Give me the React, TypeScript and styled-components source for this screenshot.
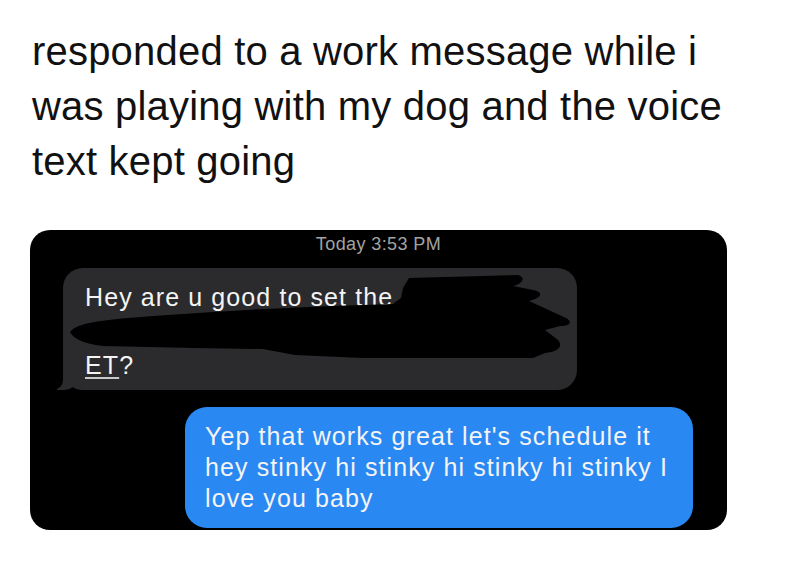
import React from "react";
import styled, { createGlobalStyle } from "styled-components";

const GlobalStyle = createGlobalStyle`
  html, body {
    margin: 0;
    padding: 0;
    background: #ffffff;
  }
`;

const received = ["Hey are u good to set the", "\u00a0", "ET?"];
const sent = [
  "Yep that works great let's schedule it",
  "hey stinky hi stinky hi stinky hi stinky I",
  "love you baby",
];

export default function App() {
  return (
    <>
      <GlobalStyle />
      <Page>
        <Caption>
          <CaptionLine>responded to a work message while i</CaptionLine>
          <CaptionLine>was playing with my dog and the voice</CaptionLine>
          <CaptionLine>text kept going</CaptionLine>
        </Caption>

        <Screen>
          <Timestamp>Today 3:53 PM</Timestamp>

          <ReceivedBubble>
            <BubbleLine>{received[0]}</BubbleLine>
            <BubbleLine>{received[1]}</BubbleLine>
            <BubbleLine>
              <Link>ET</Link>?
            </BubbleLine>
            <Scribble viewBox="0 0 514 122" width="514" height="122">
              <path
                d="M7 64 C15 54 40 52 90 48 L150 44 C190 41 230 40 270 38 L330 36 L338 30 L340 20 L346 10 L455 7 C463 9 460 16 450 18 L470 22 C481 24 479 30 466 33 L503 50 C510 54 507 58 497 58 L482 62 L495 72 C501 79 494 84 482 85 L470 90 L300 90 L232 87 L200 81 L130 80 L40 78 C20 76 10 70 7 64 Z"
                fill="#000"
              />
              <path d="M332 34 L346 28 L344 38 Z" fill="#000" />
            </Scribble>
          </ReceivedBubble>

          <SentBubble>
            {sent.map((line) => (
              <BubbleLine key={line}>{line}</BubbleLine>
            ))}
          </SentBubble>
        </Screen>
      </Page>
    </>
  );
}

const Page = styled.div`
  display: flex;
  flex-direction: column;
  align-items: flex-start;
  padding: 24px 0 0 30px;
  width: 800px;
  height: 562px;
  box-sizing: border-box;
  background: #ffffff;
`;

const Caption = styled.div`
  padding-left: 2px;
  margin-bottom: 41px;
  font-family: "Liberation Sans", Arial, sans-serif;
  font-size: 40px;
  line-height: 55px;
  letter-spacing: 0.2px;
  color: #111111;
`;

const CaptionLine = styled.div`
  white-space: nowrap;
`;

const Screen = styled.div`
  display: flex;
  flex-direction: column;
  width: 697px;
  height: 300px;
  padding-top: 3px;
  box-sizing: border-box;
  background: #000000;
  border-radius: 20px;
  overflow: hidden;
  font-family: "Liberation Sans", Arial, sans-serif;
`;

const Timestamp = styled.div`
  align-self: center;
  font-size: 18px;
  line-height: 22px;
  letter-spacing: 0.4px;
  color: #a2a2a2;
`;

const BubbleBase = styled.div`
  position: relative;
  box-sizing: border-box;
  font-size: 25px;
  letter-spacing: 1.1px;
  color: #f4f4f4;
`;

const ReceivedBubble = styled(BubbleBase)`
  width: 514px;
  margin: 13px 0 0 33px;
  padding: 12px 0 8px 22px;
  line-height: 34px;
  background: #2b2b2e;
  border-radius: 20px;

  &::before {
    content: "";
    position: absolute;
    left: -6px;
    bottom: 0;
    width: 22px;
    height: 18px;
    background: #2b2b2e;
    border-bottom-right-radius: 16px 14px;
  }

  &::after {
    content: "";
    position: absolute;
    left: -12px;
    bottom: 0;
    width: 12px;
    height: 18px;
    background: #000000;
    border-bottom-right-radius: 10px;
  }
`;

const SentBubble = styled(BubbleBase)`
  align-self: flex-end;
  width: 508px;
  margin: 17px 34px 0 0;
  padding: 14px 0 14px 20px;
  line-height: 31px;
  background: #2a88f3;
  border-radius: 22px;
`;

const BubbleLine = styled.div`
  position: relative;
  z-index: 1;
  white-space: nowrap;
`;

const Link = styled.span`
  text-decoration: underline;
  text-decoration-thickness: 2px;
  text-underline-offset: 3px;
  text-decoration-color: #c8c8c8;
`;

const Scribble = styled.svg`
  position: absolute;
  top: 0;
  left: 0;
  z-index: 2;
`;
